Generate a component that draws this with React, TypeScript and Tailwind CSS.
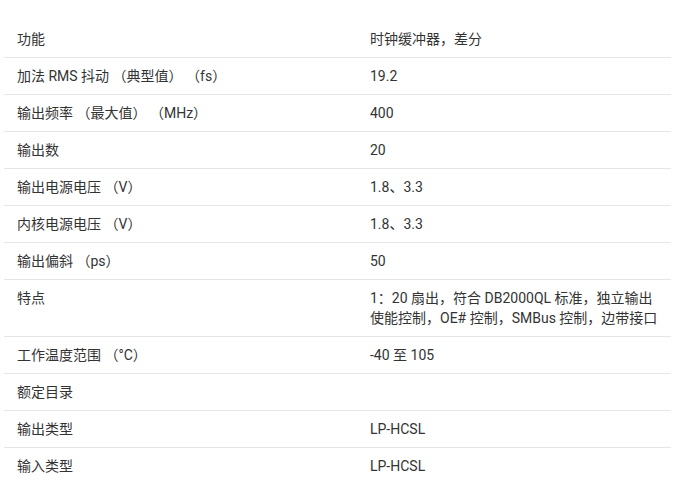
import React from 'react';

interface SpecRow {
  label: string;
  value: string;
}

const rows: SpecRow[] = [
  { label: '功能', value: '时钟缓冲器，差分' },
  { label: '加法 RMS 抖动 （典型值） （fs）', value: '19.2' },
  { label: '输出频率 （最大值） （MHz）', value: '400' },
  { label: '输出数', value: '20' },
  { label: '输出电源电压 （V）', value: '1.8、3.3' },
  { label: '内核电源电压 （V）', value: '1.8、3.3' },
  { label: '输出偏斜 （ps）', value: '50' },
  {
    label: '特点',
    value: '1：20 扇出，符合 DB2000QL 标准，独立输出使能控制，OE# 控制，SMBus 控制，边带接口',
  },
  { label: '工作温度范围 （°C）', value: '-40 至 105' },
  { label: '额定目录', value: '' },
  { label: '输出类型', value: 'LP-HCSL' },
  { label: '输入类型', value: 'LP-HCSL' },
];

export default function App() {
  return (
    <div
      className="w-[685px] h-[484px] bg-white overflow-hidden pt-[21px] pl-[4px]"
      style={{ fontFamily: 'Roboto, "Noto Sans CJK SC", sans-serif' }}
    >
      <div className="w-[667px]">
        {rows.map((row, i) => (
          <div
            key={i}
            className={`grid grid-cols-[353px_1fr] text-[14px] leading-[20px] text-[#333333] ${
              i < rows.length - 1 ? 'border-b border-[#e5e5e5]' : ''
            }`}
          >
            <div className="px-[13px] py-[8px]">{row.label}</div>
            <div className="px-[13px] py-[8px]">{row.value}</div>
          </div>
        ))}
      </div>
    </div>
  );
}
